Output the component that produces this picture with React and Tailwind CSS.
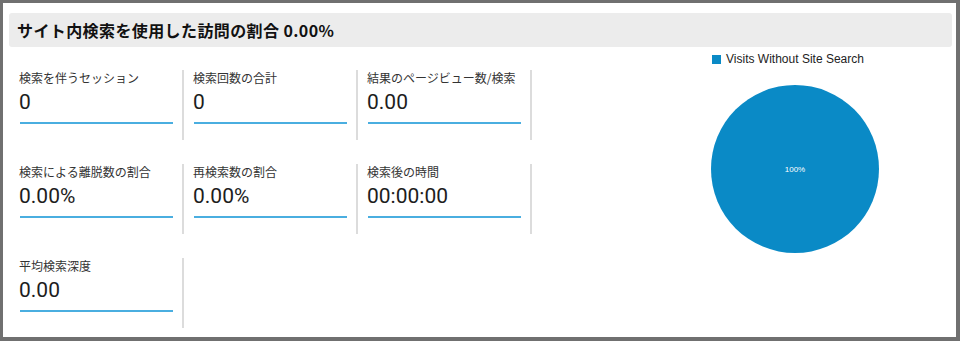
import React from "react";

const tiles = [
  ["検索を伴うセッション", "0"],
  ["検索回数の合計", "0"],
  ["結果のページビュー数/検索", "0.00"],
  ["検索による離脱数の割合", "0.00%"],
  ["再検索数の割合", "0.00%"],
  ["検索後の時間", "00:00:00"],
  ["平均検索深度", "0.00"],
];

function Tile({ label, value }) {
  return (
    <div className="h-[70px] w-[174px] border-r-2 border-[#dcdcdc] pl-[9px]">
      <div className="text-[12px] leading-[16px] text-[#333] whitespace-nowrap">{label}</div>
      <div className="mt-[2px] text-[21px] leading-[28px] text-[#1d1d1d] font-['Roboto',sans-serif]">{value}</div>
      <div className="ml-[1px] mt-[6px] h-[2px] w-[153px] bg-[#4aaee0]" />
    </div>
  );
}

export default function App() {
  return (
    <div className="w-[960px] h-[341px] bg-[#707070] pl-[3px] pt-[3px] pr-[4px] pb-[4px] font-['Noto_Sans_CJK_JP','Noto_Sans',sans-serif]">
      <div className="h-full w-full bg-white flex flex-col">
        <div className="ml-[6px] mr-[4px] mt-[10px] h-[34px] rounded-[3px] bg-[#ececec] flex items-center pl-[8px]">
          <span className="text-[16px] font-bold text-[#111] tracking-[0.4px]">
            サイト内検索を使用した訪問の割合 0.00%
          </span>
        </div>
        <div className="flex">
          <div className="ml-[7px] mt-[23px] w-[522px] grid grid-cols-3 gap-y-[24px] content-start">
            {tiles.map(([l, v]) => (
              <Tile key={l} label={l} value={v} />
            ))}
          </div>
          <div className="ml-auto mr-[2px] w-[318px] pt-[4px] flex flex-col items-center">
            <div className="flex items-center gap-[5px] mr-[14px] font-['Liberation_Sans',sans-serif] text-[12px] leading-[16px] text-[#222]">
              <span className="inline-block w-[9px] h-[9px] bg-[#0a8ac6]" />
              <span>Visits Without Site Search</span>
            </div>
            <svg width="170" height="170" viewBox="0 0 170 170" className="mt-[17px]">
              <circle cx="85" cy="85" r="84" fill="#0a8ac6" />
              <text x="85" y="88" textAnchor="middle" fontSize="8" fill="#ffffff" fontFamily="Liberation Sans, sans-serif">100%</text>
            </svg>
          </div>
        </div>
      </div>
    </div>
  );
}
